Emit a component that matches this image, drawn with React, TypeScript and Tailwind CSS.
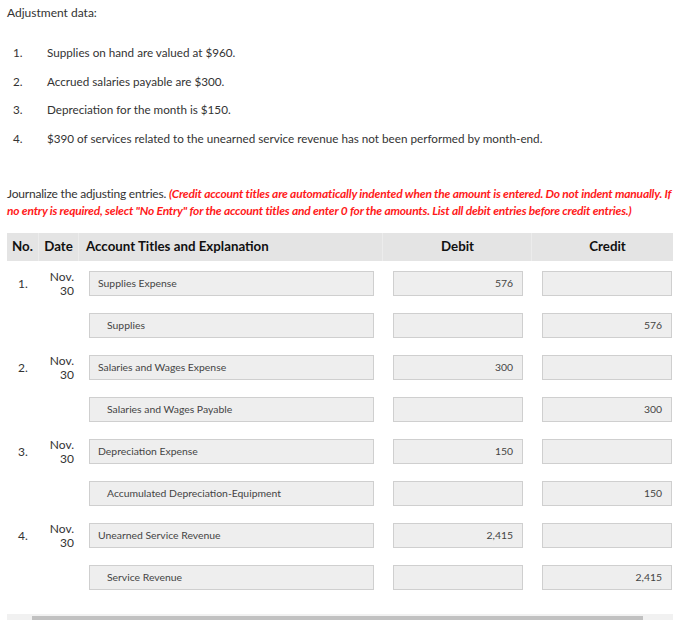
import React from 'react';

const adjustments = [
  'Supplies on hand are valued at $960.',
  'Accrued salaries payable are $300.',
  'Depreciation for the month is $150.',
  '$390 of services related to the unearned service revenue has not been performed by month-end.',
];

type Entry = {
  no: string;
  debit: { title: string; amount: string };
  credit: { title: string; amount: string };
};

const entries: Entry[] = [
  { no: '1.', debit: { title: 'Supplies Expense', amount: '576' }, credit: { title: 'Supplies', amount: '576' } },
  { no: '2.', debit: { title: 'Salaries and Wages Expense', amount: '300' }, credit: { title: 'Salaries and Wages Payable', amount: '300' } },
  { no: '3.', debit: { title: 'Depreciation Expense', amount: '150' }, credit: { title: 'Accumulated Depreciation-Equipment', amount: '150' } },
  { no: '4.', debit: { title: 'Unearned Service Revenue', amount: '2,415' }, credit: { title: 'Service Revenue', amount: '2,415' } },
];

const box = 'h-[25px] border border-[#cfcfcf] bg-[#eeeeee] text-[10.4px] text-[#444] flex items-center';

function Row({ no, title, debit, credit, indent }: { no?: string; title: string; debit: string; credit: string; indent?: boolean }) {
  return (
    <div className="grid grid-cols-[32px_40px_304px_149px_141px] h-[42px] items-center">
      <div className="text-[12px] text-[#333] text-center">{no}</div>
      <div className="text-[12px] text-[#333] text-right pr-[5px] leading-[14px]">
        {no && (
          <>
            Nov.
            <br />
            30
          </>
        )}
      </div>
      <div className="pl-[10px] pr-[9px]">
        <div className={`${box} ${indent ? 'pl-[17px]' : 'pl-[8px]'}`}>{title}</div>
      </div>
      <div className="pl-[10px] pr-[9px]">
        <div className={`${box} justify-end pr-[9px]`}>{debit}</div>
      </div>
      <div className="pl-[10px] pr-[1px]">
        <div className={`${box} justify-end pr-[9px]`}>{credit}</div>
      </div>
    </div>
  );
}

export default function App() {
  return (
    <div className="w-[690px] h-[620px] overflow-hidden bg-white text-[#333] font-['Lato',sans-serif]">
      <div className="px-[7px] pt-[5px]">
        <p className="text-[12px] leading-[16px]">Adjustment data:</p>

        <ol className="mt-[23px] flex flex-col gap-[12.5px]">
          {adjustments.map((a, i) => (
            <li key={i} className="flex text-[11.7px] leading-[16px]">
              <span className="w-[40px] pl-[6px]">{i + 1}.</span>
              <span>{a}</span>
            </li>
          ))}
        </ol>

        <p className="mt-[39px] text-[12px] leading-[17px] tracking-[-0.2px]">
          Journalize the adjusting entries.{' '}
          <span className="text-[#ff1a1a] italic font-bold">
            (Credit account titles are automatically indented when the amount is entered. Do not indent manually. If
            no entry is required, select "No Entry" for the account titles and enter 0 for the amounts. List all debit
            entries before credit entries.)
          </span>
        </p>

        <div className="mt-[14px] w-[666px]">
          <div className="grid grid-cols-[32px_40px_304px_149px_141px] h-[28px] bg-[#e4e4e4] text-[13.3px] font-bold text-[#111] items-center">
            <div className="h-full flex items-center justify-center border-r border-[#ececec]">No.</div>
            <div className="h-full flex items-center justify-center border-r border-[#ececec]">Date</div>
            <div className="h-full flex items-center pl-[7px] border-r border-[#ececec]">Account Titles and Explanation</div>
            <div className="h-full flex items-center justify-center pl-[10px] pr-[9px] border-r border-[#ececec]">Debit</div>
            <div className="h-full flex items-center justify-center pl-[10px]">Credit</div>
          </div>

          <div className="pt-[2px]">
            {entries.map((e) => (
              <React.Fragment key={e.no}>
                <Row no={e.no} title={e.debit.title} debit={e.debit.amount} credit="" />
                <Row title={e.credit.title} debit="" credit={e.credit.amount} indent />
              </React.Fragment>
            ))}
          </div>

          <div className="mt-[15px] h-[8px] bg-[#f1f1f1] pl-[25px] pr-[30px] pt-[2px]">
            <div className="h-full bg-[#c1c1c1]" />
          </div>
        </div>
      </div>
    </div>
  );
}
